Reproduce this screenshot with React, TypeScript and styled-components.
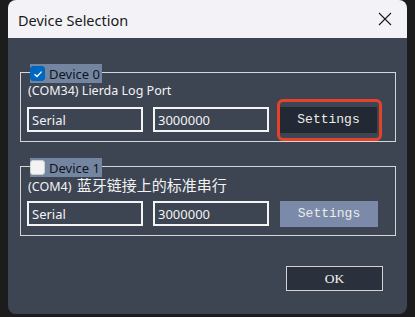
import React, { useState } from 'react';
import styled, { createGlobalStyle } from 'styled-components';

const GlobalStyle = createGlobalStyle`
  html, body {
    margin: 0;
    padding: 0;
    background: #1c1c1c;
  }
  * {
    box-sizing: border-box;
  }
`;

const Page = styled.div`
  width: 415px;
  height: 317px;
  padding: 0 8px;
  background: #1c1c1c;
  font-family: 'Noto Sans', 'Noto Sans CJK SC', sans-serif;
`;

const Window = styled.div`
  width: 399px;
  height: 314px;
  border-radius: 8px;
  overflow: hidden;
  display: flex;
  flex-direction: column;
`;

const TitleBar = styled.div`
  height: 38px;
  flex-shrink: 0;
  background: #f3f3f7;
  display: flex;
  align-items: center;
  justify-content: space-between;
  padding: 0 14px 0 10px;
`;

const Title = styled.span`
  font-size: 14.5px;
  color: #1a1a1a;
  margin-top: 1px;
`;

const CloseButton = styled.button`
  width: 16px;
  height: 16px;
  padding: 0;
  border: none;
  background: transparent;
  display: flex;
  align-items: center;
  justify-content: center;
  cursor: pointer;
`;

const Body = styled.div`
  flex: 1;
  background: #3d4553;
  padding: 34px 11px 0 12px;
  display: flex;
  flex-direction: column;
`;

const Group = styled.div<{ $gap?: number }>`
  border: 1px solid #d4d6da;
  padding: 0 6px 9px 6px;
  margin-bottom: ${(p) => p.$gap ?? 0}px;
  display: flex;
  flex-direction: column;
`;

const Legend = styled.label`
  width: 72px;
  height: 19px;
  margin: -9px 0 0 3px;
  background: #7485a2;
  display: flex;
  align-items: center;
  gap: 4px;
  font-size: 13px;
  color: #10141c;
  cursor: pointer;
`;

const Box = styled.span<{ $checked: boolean }>`
  width: 15px;
  height: 15px;
  border-radius: 3px;
  flex-shrink: 0;
  background: ${(p) => (p.$checked ? '#0067c0' : '#f3f3f3')};
  border: 1px solid ${(p) => (p.$checked ? '#0067c0' : '#d0d0d0')};
  display: flex;
  align-items: center;
  justify-content: center;
`;

const PortName = styled.div`
  height: 16px;
  line-height: 16px;
  margin-left: 1px;
  font-size: 12.5px;
  color: #f2f2f2;
  white-space: nowrap;
`;

const Cjk = styled.span`
  font-family: 'Noto Sans CJK SC', sans-serif;
  font-size: 15px;
  margin-left: 2px;
`;

const Row = styled.div`
  margin-top: 8px;
  display: flex;
  align-items: center;
  height: 25px;
`;

const Field = styled.input`
  width: 116px;
  height: 25px;
  margin-right: 10px;
  border: 2px solid #f4f4f4;
  background: transparent;
  color: #f2f2f2;
  padding: 0 3px;
  font-family: 'Noto Sans', sans-serif;
  font-size: 13px;
  outline: none;
`;

const FocusRing = styled.div`
  margin: -8px 0 -8px -2px;
  padding: 5px 2px 5px 0;
  border: 3px solid #e8412a;
  border-radius: 6px;
  display: flex;
`;

const SettingsButton = styled.button<{ $focused?: boolean }>`
  width: ${(p) => (p.$focused ? 97 : 98)}px;
  height: 26px;
  margin-left: ${(p) => (p.$focused ? 0 : 1)}px;
  border: none;
  background: ${(p) => (p.$focused ? '#222934' : '#7a8aa8')};
  color: #ececec;
  font-family: 'Liberation Mono', monospace;
  font-weight: normal;
  font-size: 13px;
  cursor: pointer;
`;

const Footer = styled.div`
  margin-top: 30px;
  padding-right: 13px;
  display: flex;
  justify-content: flex-end;
`;

const OkButton = styled.button`
  width: 97px;
  height: 25px;
  border: 1px solid #d2d2d2;
  background: #2a303c;
  color: #f4f4f4;
  font-family: 'Liberation Serif', serif;
  font-size: 13.5px;
  cursor: pointer;
`;

type Device = {
  label: string;
  port: string;
  name: string;
  cjk?: boolean;
  type: string;
  baud: string;
};

const devices: Device[] = [
  { label: 'Device 0', port: 'COM34', name: 'Lierda Log Port', type: 'Serial', baud: '3000000' },
  { label: 'Device 1', port: 'COM4', name: '蓝牙链接上的标准串行', cjk: true, type: 'Serial', baud: '3000000' },
];

function Check({ checked }: { checked: boolean }) {
  return (
    <Box $checked={checked}>
      {checked && (
        <svg width="10" height="10" viewBox="0 0 10 10">
          <path d="M1.5 5.2 L4 7.5 L8.6 2.6" fill="none" stroke="#ffffff" strokeWidth="1.3" />
        </svg>
      )}
    </Box>
  );
}

export default function App() {
  const [selected, setSelected] = useState<boolean[]>([true, false]);

  const toggle = (i: number) =>
    setSelected((prev) => prev.map((v, j) => (j === i ? !v : v)));

  return (
    <Page>
      <GlobalStyle />
      <Window>
        <TitleBar>
          <Title>Device Selection</Title>
          <CloseButton aria-label="Close">
            <svg width="14" height="14" viewBox="0 0 14 14">
              <path d="M1 1 L13 13 M13 1 L1 13" stroke="#1a1a1a" strokeWidth="1.1" />
            </svg>
          </CloseButton>
        </TitleBar>
        <Body>
          {devices.map((d, i) => (
            <Group key={d.label} $gap={i === 0 ? 24 : 0}>
              <Legend onClick={() => toggle(i)}>
                <Check checked={selected[i]} />
                {d.label}
              </Legend>
              <PortName>
                ({d.port}) {d.cjk ? <Cjk>{d.name}</Cjk> : d.name}
              </PortName>
              <Row>
                <Field defaultValue={d.type} />
                <Field defaultValue={d.baud} />
                {i === 0 ? (
                  <FocusRing>
                    <SettingsButton $focused>Settings</SettingsButton>
                  </FocusRing>
                ) : (
                  <SettingsButton>Settings</SettingsButton>
                )}
              </Row>
            </Group>
          ))}
          <Footer>
            <OkButton>OK</OkButton>
          </Footer>
        </Body>
      </Window>
    </Page>
  );
}
